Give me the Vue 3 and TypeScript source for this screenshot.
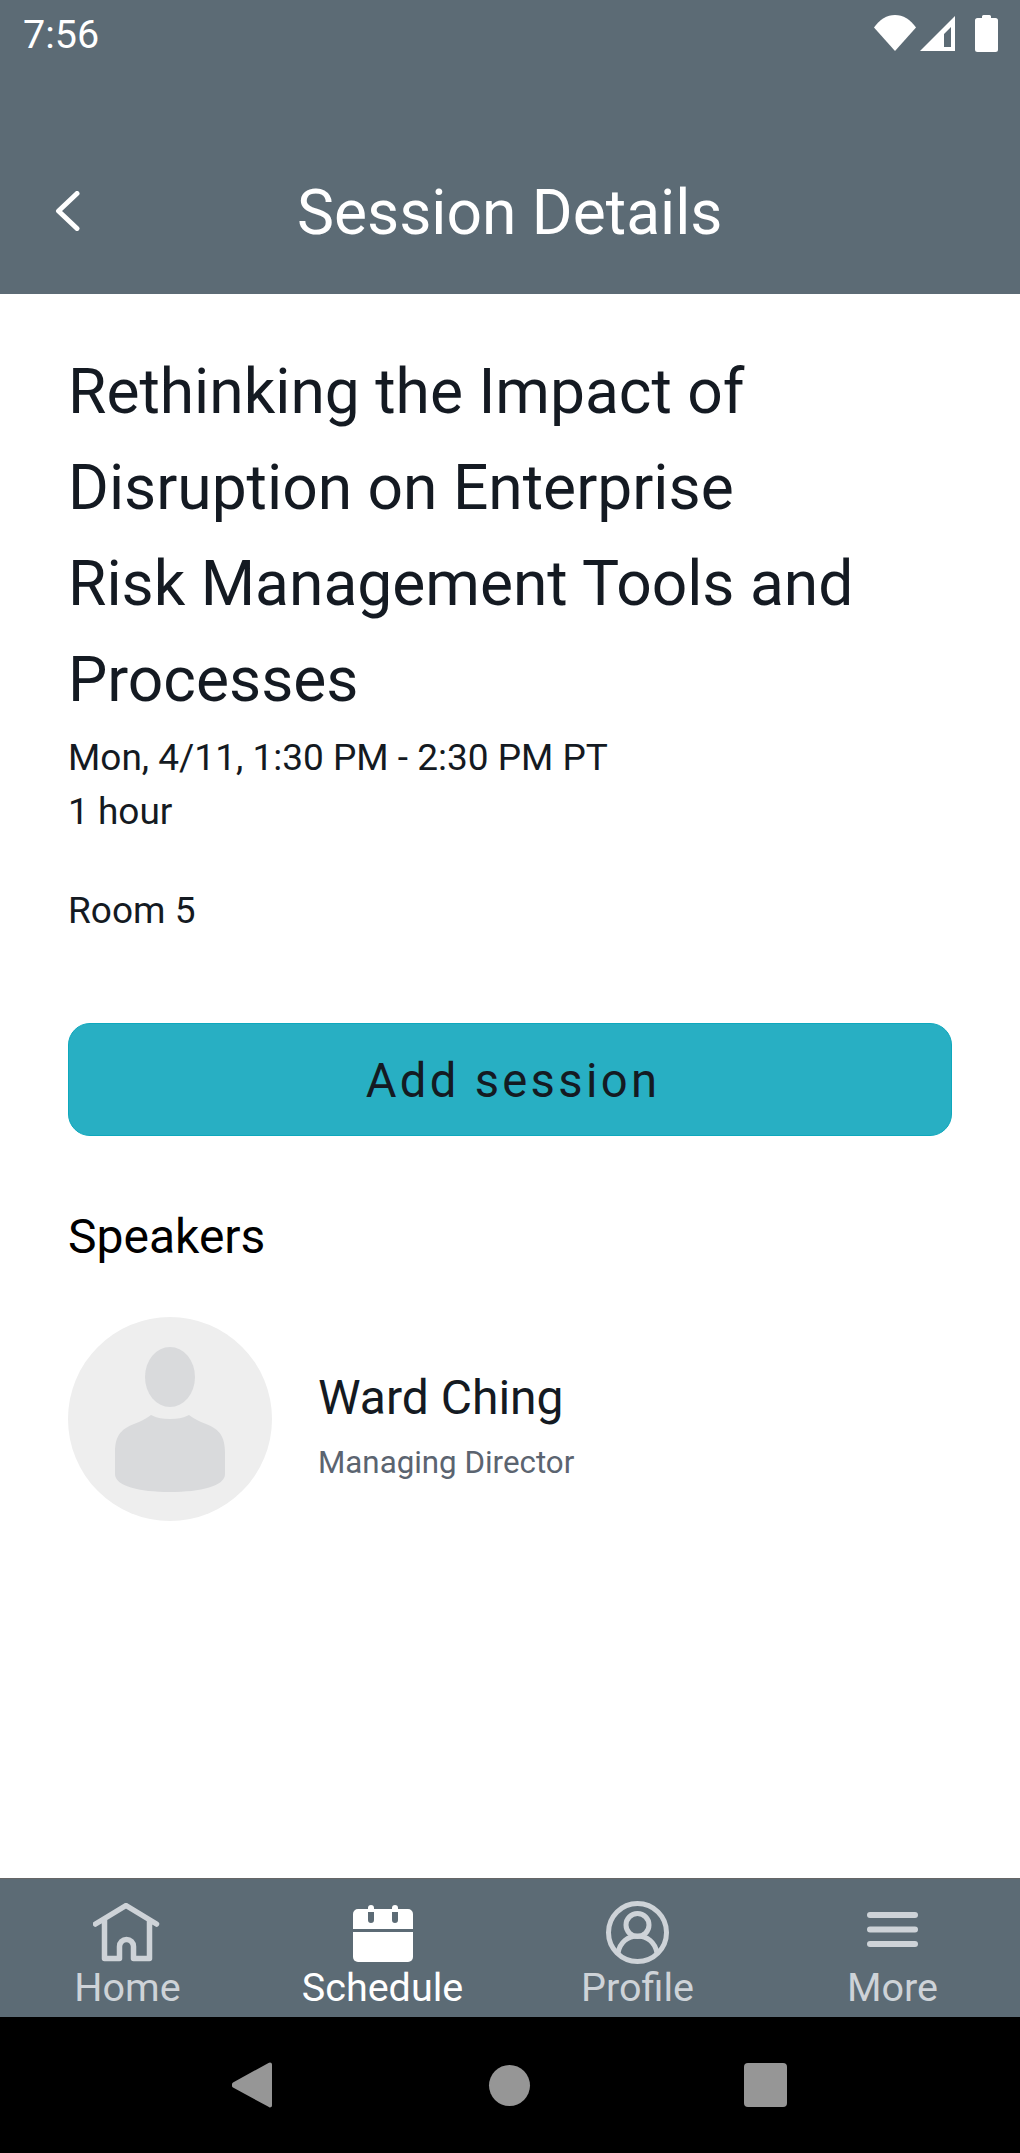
<template>
  <div class="screen">
    <header class="top-bar">
      <div class="status-bar">
        <span class="time">7:56</span>
        <div class="status-icons">
          <svg class="wifi" width="42" height="36" viewBox="0 0 42 36"><path d="M0 12.500C5.500 4.500 13 0 21 0s15.500 4.500 21 12.500L21 36z" fill="#fff" /></svg>
          <svg class="signal" width="35" height="35" viewBox="0 0 35 35"><path fill-rule="evenodd" d="M35 0v35H0zM31 11l-7 7v13h7z" fill="#fff" /></svg>
          <svg class="battery" width="23" height="37" viewBox="0 0 23 37"><path d="M7 3V1.500A1.500 1.500 0 0 1 8.500 0h6A1.500 1.500 0 0 1 16 1.500V3h4.500A2.500 2.500 0 0 1 23 5.500v29a2.500 2.500 0 0 1-2.500 2.500h-18A2.500 2.500 0 0 1 0 34.500v-29A2.500 2.500 0 0 1 2.500 3z" fill="#fff" /></svg>
        </div>
      </div>
      <div class="title-row">
        <svg class="back" width="25" height="40" viewBox="0 0 25 40"><path d="M22 2.500L3.500 20 22 37.500" fill="none" stroke="#fff" stroke-width="5" stroke-linecap="round" stroke-linejoin="round" /></svg>
        <h1>Session Details</h1>
      </div>
    </header>

    <main class="content">
      <h2 class="session-title">Rethinking the Impact of<br />Disruption on Enterprise<br />Risk Management Tools and<br />Processes</h2>
      <p class="meta first">Mon, 4/11, 1:30 PM - 2:30 PM PT</p>
      <p class="meta">1 hour</p>
      <p class="meta room">Room 5</p>
      <button type="button" class="add-btn">Add session</button>
      <h3 class="speakers">Speakers</h3>
      <div class="speaker" v-for="speaker in speakers" :key="speaker.name">
        <div class="avatar">
          <svg width="110" height="145" viewBox="0 0 110 145">
            <ellipse cx="55" cy="30" rx="25" ry="30" fill="#d9dadc" />
            <path d="M36 68c6 3 12 4 19 4s13-1 19-4c3 2 7 5 12 7 14 5 24 10 24 30v22c0 12-24 18-55 18S0 139 0 127v-22c0-20 10-25 24-30 5-2 9-5 12-7z" fill="#d9dadc" />
          </svg>
        </div>
        <div class="speaker-info">
          <div class="name">{{ speaker.name }}</div>
          <div class="role">{{ speaker.role }}</div>
        </div>
      </div>
    </main>

    <nav class="tabs">
      <div v-for="tab in tabs" :key="tab.label" class="tab" :class="{ active: tab.active }">
        <div class="tab-icon">
          <svg v-if="tab.label === 'Home'" width="69" height="60" viewBox="0 0 69 60">
            <path d="M2.500 21L33 2.500 63.500 21M11.500 17V55.500H26.500V43.500a7 7 0 0 1 14 0V55.500H56.500V17" fill="none" stroke="#ced3d8" stroke-width="5.500" stroke-linecap="round" stroke-linejoin="round" />
          </svg>
          <svg v-else-if="tab.label === 'Schedule'" width="60" height="58" viewBox="0 0 60 58">
            <path fill-rule="evenodd" d="M5 5h10V4a3 3 0 0 1 6 0v1h18V4a3 3 0 0 1 6 0v1h10a5 5 0 0 1 5 5v15H0V10a5 5 0 0 1 5-5zM15 8v8a3 3 0 0 0 6 0V8zM39 8v8a3 3 0 0 0 6 0V8z" fill="#fff" />
            <path d="M0 28h60v25a5 5 0 0 1-5 5H5a5 5 0 0 1-5-5z" fill="#fff" />
          </svg>
          <svg v-else-if="tab.label === 'Profile'" width="63" height="63" viewBox="0 0 63 63">
            <g fill="none" stroke="#ced3d8" stroke-width="5">
              <circle cx="31.500" cy="31.500" r="29" />
              <circle cx="31.500" cy="24" r="11.500" />
              <path d="M12 52c2-11 10-17 19.500-17S49 41 51 52" />
            </g>
          </svg>
          <svg v-else width="51" height="41" viewBox="0 0 51 41">
            <g fill="#ced3d8">
              <rect x="0" y="0" width="51" height="6" rx="3" />
              <rect x="0" y="14.500" width="51" height="6" rx="3" />
              <rect x="0" y="29" width="51" height="6" rx="3" />
            </g>
          </svg>
        </div>
        <span class="tab-label">{{ tab.label }}</span>
      </div>
    </nav>

    <div class="system-nav">
      <svg width="40" height="46" viewBox="0 0 40 46"><path d="M38 0.500a2 2 0 0 1 2 2v41a2 2 0 0 1-3.500 1.300L1 25.500a3.500 3.500 0 0 1 0-5L36.500 1z" fill="#969696" /></svg>
      <span class="sys-circle"></span>
      <span class="sys-square"></span>
    </div>
  </div>
</template>

<script setup lang="ts">
interface Tab {
  label: string;
  active?: boolean;
}

const tabs: Tab[] = [
  { label: "Home" },
  { label: "Schedule", active: true },
  { label: "Profile" },
  { label: "More" },
];

const speakers = [{ name: "Ward Ching", role: "Managing Director" }];
</script>

<style>
html,
body {
  margin: 0;
  background: #fff;
  overflow: hidden;
}
</style>

<style scoped>
.screen {
  width: 1020px;
  height: 2153px;
  display: flex;
  flex-direction: column;
  font-family: Roboto, "Liberation Sans", sans-serif;
  background: #fff;
}

.top-bar {
  height: 294px;
  box-sizing: border-box;
  background: #5c6b75;
  color: #fff;
  flex-shrink: 0;
}

.status-bar {
  height: 66px;
  box-sizing: border-box;
  padding: 15px 22px 0 23px;
  display: flex;
  justify-content: space-between;
  align-items: flex-start;
}

.time {
  font-size: 39.500px;
  line-height: 40px;
}

.status-icons {
  display: flex;
  align-items: flex-start;
}

.signal {
  margin: 1px 0 0 4px;
}

.battery {
  margin-left: 20px;
}

.title-row {
  display: flex;
  align-items: center;
  padding: 125px 0 0 55px;
  height: 40px;
}

.title-row h1 {
  margin: 4px 0 0 217px;
  font-size: 62.300px;
  font-weight: 400;
  line-height: 40px;
}

.content {
  flex: 1;
  padding: 0 68px;
}

.session-title {
  margin: 0;
  padding-top: 50px;
  font-size: 62.300px;
  font-weight: 400;
  line-height: 96px;
  color: #141a22;
}

.meta {
  margin: 0;
  font-size: 37px;
  line-height: 54px;
  color: #141a22;
}

.meta.first {
  margin-top: 3px;
}

.room {
  margin-top: 45px;
}

.add-btn {
  display: block;
  width: 884px;
  height: 113px;
  margin-top: 85px;
  padding: 2px 0 0 6px;
  box-sizing: border-box;
  border: 1px solid #0ea8bd;
  border-radius: 22px;
  background: #28afc3;
  font-family: inherit;
  font-size: 47.200px;
  letter-spacing: 3.300px;
  color: #141a22;
}

.speakers {
  margin: 0;
  padding-top: 75px;
  font-size: 48px;
  font-weight: 400;
  line-height: 52px;
  color: #000;
}

.speaker {
  display: flex;
  align-items: center;
  margin-top: 54px;
}

.avatar {
  width: 204px;
  height: 204px;
  border-radius: 50%;
  background: #eeeeee;
  display: flex;
  align-items: flex-start;
  justify-content: center;
  padding-top: 30px;
  box-sizing: border-box;
  flex-shrink: 0;
}

.speaker-info {
  margin-left: 46px;
  padding-top: 13px;
}

.name {
  font-size: 48px;
  line-height: 60px;
  color: #141a22;
}

.role {
  margin-top: 15px;
  font-size: 31.300px;
  line-height: 40px;
  color: #5b6470;
}

.tabs {
  height: 139px;
  box-sizing: border-box;
  border-top: 1px solid #666;
  background: #5c6b75;
  display: grid;
  grid-template-columns: repeat(4, 1fr);
  flex-shrink: 0;
}

.tab {
  display: flex;
  flex-direction: column;
  align-items: center;
  color: #ced3d8;
}

.tab.active {
  color: #fff;
}

.tab-icon {
  height: 86px;
  display: flex;
  align-items: center;
  padding-top: 21px;
  box-sizing: border-box;
}

.tab-label {
  font-size: 39.500px;
  line-height: 46px;
}

.system-nav {
  height: 136px;
  background: #000;
  display: flex;
  align-items: center;
  flex-shrink: 0;
  padding-left: 232px;
  box-sizing: border-box;
}

.sys-circle {
  width: 41px;
  height: 41px;
  border-radius: 50%;
  background: #969696;
  margin-left: 217px;
}

.sys-square {
  width: 43px;
  height: 44px;
  border-radius: 4px;
  background: #969696;
  margin-left: 214px;
}
</style>
